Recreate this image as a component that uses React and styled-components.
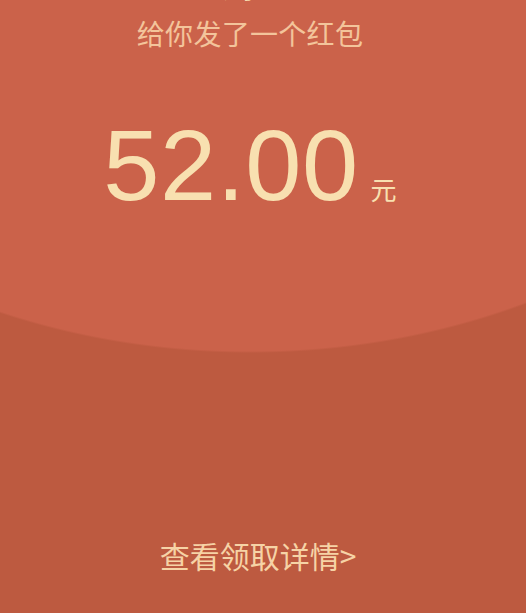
import styled, { createGlobalStyle } from 'styled-components';

const GlobalStyle = createGlobalStyle`
  html, body {
    margin: 0;
    padding: 0;
    overflow: hidden;
  }
  body {
    font-family: "Noto Sans CJK SC", "Noto Sans", sans-serif;
  }
`

// top cover is the lighter ellipse, the rest is the darker pocket
const Envelope = styled.div`
  display: flex;
  flex-direction: column;
  align-items: center;
  height: 100vh;
  padding-right: 26px;
  box-sizing: border-box;
  background: radial-gradient(
    640px 500px at 250px -147px,
    #cb624a 99.6%,
    #bd5a40 100%
  ) #be5b41;
`

const Sender = styled.div`
  margin-top: -24px;
  font-size: 24px;
  line-height: 24px;
  color: #f8e0b0;
`

const Wish = styled.div`
  margin-top: 19px;
  font-size: 28px;
  line-height: 28px;
  color: #f3c49b;
  letter-spacing: 0.3px;
`

const AmountRow = styled.div`
  display: flex;
  align-items: baseline;
  margin-top: 68px;
  color: #f8e0b0;
`

const Amount = styled.span`
  font-family: "Liberation Sans", Arial, sans-serif;
  font-size: 101px;
  line-height: 1;
  letter-spacing: 0.5px;
`

const Unit = styled.span`
  margin-left: 12px;
  font-size: 26px;
  line-height: 1;
`

const DetailLink = styled.a`
  margin-top: auto;
  margin-bottom: 43px;
  margin-left: 16px;
  font-size: 30px;
  line-height: 30px;
  color: #f6d3a6;
  text-decoration: none;
  cursor: pointer;
`

const App = () => {
  return (
    <>
      <GlobalStyle />
      <Envelope>
        <Sender>张小王</Sender>
        <Wish>给你发了一个红包</Wish>
        <AmountRow>
          <Amount>52.00</Amount>
          <Unit>元</Unit>
        </AmountRow>
        <DetailLink>查看领取详情&gt;</DetailLink>
      </Envelope>
    </>
  )
}

export default App;
